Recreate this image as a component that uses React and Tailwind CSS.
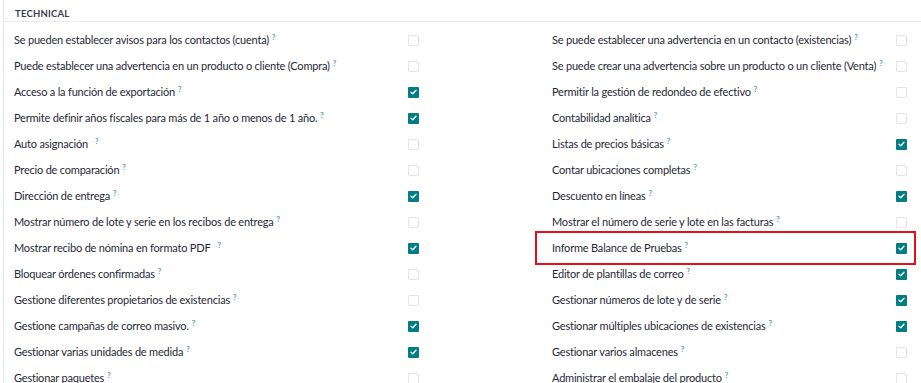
const left = [
  { label: 'Se pueden establecer avisos para los contactos (cuenta)', on: false },
  { label: 'Puede establecer una advertencia en un producto o cliente (Compra)', on: false },
  { label: 'Acceso a la función de exportación', on: true },
  { label: 'Permite definir años fiscales para más de 1 año o menos de 1 año.', on: true },
  { label: 'Auto asignación', on: false, wide: true },
  { label: 'Precio de comparación', on: false },
  { label: 'Dirección de entrega', on: true },
  { label: 'Mostrar número de lote y serie en los recibos de entrega', on: false },
  { label: 'Mostrar recibo de nómina en formato PDF', on: true, wide: true },
  { label: 'Bloquear órdenes confirmadas', on: false },
  { label: 'Gestione diferentes propietarios de existencias', on: false },
  { label: 'Gestione campañas de correo masivo.', on: true },
  { label: 'Gestionar varias unidades de medida', on: true },
  { label: 'Gestionar paquetes', on: false },
];

const right = [
  { label: 'Se puede establecer una advertencia en un contacto (existencias)', on: false },
  { label: 'Se puede crear una advertencia sobre un producto o un cliente (Venta)', on: false },
  { label: 'Permitir la gestión de redondeo de efectivo', on: false },
  { label: 'Contabilidad analítica', on: false },
  { label: 'Listas de precios básicas', on: true },
  { label: 'Contar ubicaciones completas', on: false },
  { label: 'Descuento en líneas', on: true },
  { label: 'Mostrar el número de serie y lote en las facturas', on: false },
  { label: 'Informe Balance de Pruebas', on: true, marked: true },
  { label: 'Editor de plantillas de correo', on: true },
  { label: 'Gestionar números de lote y de serie', on: true },
  { label: 'Gestionar múltiples ubicaciones de existencias', on: true },
  { label: 'Gestionar varios almacenes', on: false },
  { label: 'Administrar el embalaje del producto', on: false },
];

function Check({ on }) {
  if (!on) {
    return <span className="block w-[11px] h-[11px] rounded-[2px] border border-[#e1e4e8] bg-white" />;
  }
  return (
    <span className="flex items-center justify-center w-[11px] h-[11px] rounded-[1px] bg-[#017e84]">
      <svg width="7" height="6" viewBox="0 0 7 6" fill="none">
        <path d="M1 3.2 L2.7 4.7 L6 1.3" stroke="white" strokeWidth="1.3" strokeLinecap="round" strokeLinejoin="round" />
      </svg>
    </span>
  );
}

function Row({ item, className }) {
  return (
    <div className={`relative flex items-center justify-between h-[26px] ${className}`}>
      {item.marked && (
        <span className="absolute -top-[4px] -bottom-[4px] -left-[2px] right-0 border-2 border-[#e5101a]" />
      )}
      <span className="text-[11px] tracking-[-0.2px] text-[#1f2937] whitespace-nowrap">
        {item.label}
        <sup className={`text-[7.5px] tracking-normal font-bold text-[#4a9cc7] ${item.wide ? 'ml-[7px]' : 'ml-[3px]'}`}>?</sup>
      </span>
      <Check on={item.on} />
    </div>
  );
}

export default function App() {
  return (
    <div className="w-[921px] h-[383px] overflow-hidden bg-white" style={{ fontFamily: 'Lato, "Noto Sans", sans-serif' }}>
      <div className="ml-[3px] border-l border-[#e5e7eb] h-full">
        <div className="h-[22px] border-b border-[#e9ebee] pl-[11px] pt-[8px]">
          <span className="block text-[9.5px] leading-[12px] font-bold text-[#374151] tracking-[0.2px]">TECHNICAL</span>
        </div>
        <div className="flex pt-[5px]">
          <div className="w-[415px] pl-[10px]">
            {left.map((item) => (
              <Row key={item.label} item={item} />
            ))}
          </div>
          <div className="w-[379px] ml-[118px]">
            {right.map((item) => (
              <Row key={item.label} item={item} className="pl-[15px] pr-[9px]" />
            ))}
          </div>
        </div>
      </div>
    </div>
  );
}
